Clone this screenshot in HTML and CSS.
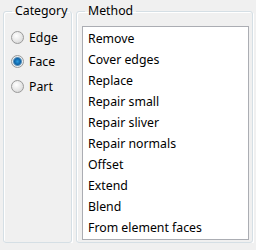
FILE: index.html
```html
<!DOCTYPE html>
<html>
  <head>
    <title>Category / Method</title>
    <link rel="stylesheet" href="styles.css">
  </head>
  <body>
    <div class="panel">
      <fieldset class="group category">
        <legend>Category</legend>
        <label class="radio"><span class="dot"></span>Edge</label>
        <label class="radio"><span class="dot checked"></span>Face</label>
        <label class="radio"><span class="dot"></span>Part</label>
      </fieldset>
      <fieldset class="group method">
        <legend>Method</legend>
        <ul class="list">
          <li>Remove</li>
          <li>Cover edges</li>
          <li>Replace</li>
          <li>Repair small</li>
          <li>Repair sliver</li>
          <li>Repair normals</li>
          <li>Offset</li>
          <li>Extend</li>
          <li>Blend</li>
          <li>From element faces</li>
        </ul>
      </fieldset>
    </div>
  </body>
</html>
```

FILE: styles.css
```css
body {
  margin: 0;
  background: #f0f0f0;
  font-family: "Noto Sans", "Open Sans", sans-serif;
  font-size: 12.3px;
  color: #000;
}
.panel {
  display: flex;
  gap: 4px;
  padding: 3px 0 0 3px;
  height: 243px;
  box-sizing: border-box;
}
.group {
  margin: 0;
  border: 1px solid #d5dfe5;
  border-radius: 3px;
  box-shadow: inset 1px 1px 0 #fff, 1px 1px 0 #fff;
  min-width: 0;
}
.group legend {
  padding: 0 3px;
  line-height: 16px;
  white-space: nowrap;
}
.category {
  width: 69px;
  box-sizing: border-box;
  padding: 10px 0 0 7px;
  display: flex;
  flex-direction: column;
  gap: 8.5px;
}
.category legend {
  margin-left: 1px;
}
.method {
  width: 177px;
  box-sizing: border-box;
  padding: 7px 3px 2px 5px;
}
.method legend {
  margin-left: 3px;
}
.radio {
  display: flex;
  align-items: center;
  gap: 5px;
  height: 16px;
}
.dot {
  width: 11px;
  height: 11px;
  border-radius: 50%;
  border: 1px solid #9a9a9a;
  background: radial-gradient(circle at 40% 35%, #fff 0, #e8e8e8 50%, #cfcfcf 100%);
}
.dot.checked {
  background: radial-gradient(circle, #2a9be0 0, #0d64a8 3px, #5a8fb8 4px, #e8eef2 5px, #dcdcdc 100%);
}
.list {
  list-style: none;
  margin: 0;
  padding: 1px 0 0 5px;
  height: 100%;
  box-sizing: border-box;
  background: #fff;
  border: 1px solid #abadb3;
}
.list li {
  height: 21px;
  line-height: 21px;
}
```
